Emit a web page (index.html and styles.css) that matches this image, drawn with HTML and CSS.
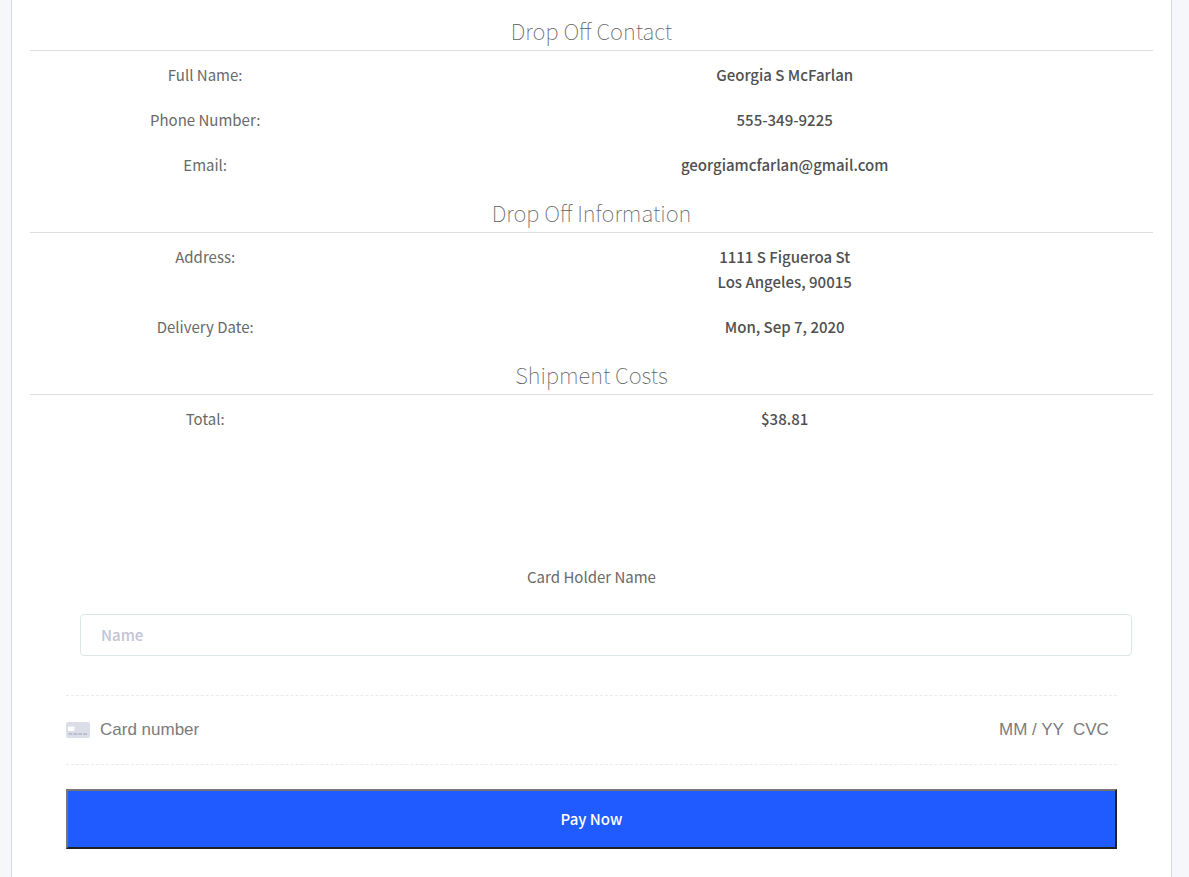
FILE: index.html
```
<!DOCTYPE html>
<html lang="en">
<head>
<meta charset="utf-8">
<meta name="viewport" content="width=device-width, initial-scale=1">
<title>Shipment Payment</title>
<link rel="stylesheet" href="styles.css">
</head>
<body>
<main class="panel">
  <section class="section">
    <h2 class="section-title">Drop Off Contact</h2>
    <dl class="details">
      <div class="row"><dt>Full Name:</dt><dd>Georgia S McFarlan</dd></div>
      <div class="row"><dt>Phone Number:</dt><dd>555-349-9225</dd></div>
      <div class="row"><dt>Email:</dt><dd>georgiamcfarlan@gmail.com</dd></div>
    </dl>
  </section>
  <section class="section">
    <h2 class="section-title">Drop Off Information</h2>
    <dl class="details">
      <div class="row"><dt>Address:</dt><dd>1111 S Figueroa St<br>Los Angeles, 90015</dd></div>
      <div class="row"><dt>Delivery Date:</dt><dd>Mon, Sep 7, 2020</dd></div>
    </dl>
  </section>
  <section class="section">
    <h2 class="section-title">Shipment Costs</h2>
    <dl class="details">
      <div class="row"><dt>Total:</dt><dd>$38.81</dd></div>
    </dl>
  </section>
  <form class="payment">
    <label class="name-label" for="holder">Card Holder Name</label>
    <div class="name-field">
      <input class="name-input" id="holder" type="text" placeholder="Name">
    </div>
    <div class="card-field">
      <svg class="card-icon" width="24" height="16" viewBox="0 0 24 16" aria-hidden="true">
        <rect width="24" height="16" rx="2" fill="#dbdee6"/>
        <rect x="2" y="4.500" width="6.500" height="4.500" rx="1" fill="#fff"/>
        <path d="M2.500 12h3.700M7.500 12h3.700M12.300 12h3.700M17.200 12h3.800" stroke="#b9bfd0" stroke-width="1.800"/>
      </svg>
      <input class="card-input card-number" type="text" placeholder="Card number" aria-label="Card number">
      <input class="card-input card-expiry" type="text" placeholder="MM / YY" aria-label="Expiry date">
      <input class="card-input card-cvc" type="text" placeholder="CVC" aria-label="CVC">
    </div>
    <button class="pay" type="button">Pay Now</button>
  </form>
</main>
</body>
</html>
```
FILE: styles.css
```
* {
  box-sizing: border-box;
}

body {
  margin: 0;
  padding: 0 17px 0 11px;
  background: #f5f7fb;
  color: #696969;
  font-family: "Noto Sans CJK SC", sans-serif;
  font-size: 15px;
  line-height: 25px;
}

.panel {
  min-height: 100vh;
  padding: 6px 0 28px;
  border: solid #d3dce2;
  border-width: 0 1px;
  background: #fff;
  text-align: center;
}

.section-title {
  margin: 0 18px 1px;
  padding: 9px 0 5px;
  border-bottom: 1px solid #dedede;
  color: #606060;
  font-size: 22px;
  font-weight: 100;
  line-height: 30px;
}

.details {
  margin: 0;
  padding-bottom: 1px;
}

.row {
  display: grid;
  grid-template-columns: 1fr 2fr;
  padding: 10px 0;
}

.row dd {
  margin: 0;
  color: #505050;
  font-weight: 500;
}

.payment {
  display: flex;
  flex-direction: column;
  margin-top: 122px;
}

.name-label {
  margin-bottom: 25px;
}

.name-field {
  padding: 0 39px 0 68px;
}

.name-input {
  display: block;
  width: 100%;
  height: 42px;
  padding: 0 20px 2px;
  border: 1px solid #dde5e8;
  border-radius: 4px;
  background: #fff;
  color: #696969;
  font: inherit;
  font-weight: 500;
}

.name-input::placeholder {
  color: #c3c3d5;
}

.card-field {
  display: flex;
  align-items: center;
  height: 70px;
  margin: 39px 54px 24px;
  padding-right: 8px;
  border: dashed #ebebeb;
  border-width: 1px 0;
}

.card-input {
  height: 28px;
  padding: 0;
  border: 0;
  background: none;
  color: #696969;
  font-family: "Liberation Sans", sans-serif;
  font-size: 17px;
}

.card-input::placeholder {
  color: #7b7b7b;
}

.card-number {
  flex: 1;
  min-width: 0;
  margin-left: 10px;
}

.card-expiry {
  width: 74px;
}

.card-cvc {
  width: 36px;
}

.pay {
  height: 60px;
  margin: 0 54px;
  padding: 0 0 2px;
  border: 2px solid;
  border-color: #767676 #212121 #212121 #767676;
  background: #1f5bff;
  color: #fff;
  font: inherit;
  font-weight: 500;
}
```
